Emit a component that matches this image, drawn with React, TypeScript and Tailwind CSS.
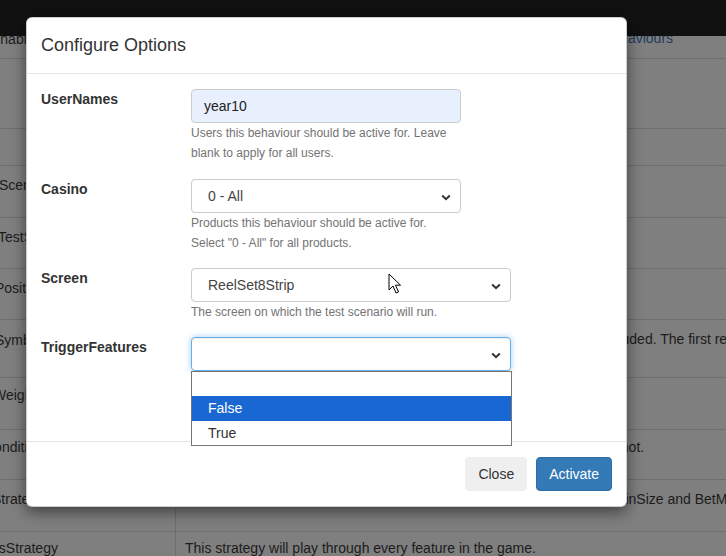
import React from "react";

const rows = [
  { h: "h-[23px]", left: "Enabled", lx: "ml-[-9px] mt-[-7px]", right: "", link: true },
  { h: "h-[70px]", left: "", lx: "", right: "" },
  { h: "h-[37px]", left: "", lx: "", right: "" },
  { h: "h-[52px]", left: "Scenario", lx: "ml-[-1px] mt-[9px]", right: "" },
  { h: "h-[51px]", left: "TestSpin", lx: "ml-[-2px] mt-[9px]", right: "" },
  { h: "h-[51px]", left: "Positions", lx: "ml-[-5px] mt-[9px]", right: "" },
  {
    h: "h-[58px]",
    left: "Symbols",
    lx: "ml-[-5px] mt-[10px]",
    right: "Comma separated list of symbols that will land, all others are then excluded. The first reel is reel 0.",
  },
  { h: "h-[52px]", left: "Weights", lx: "ml-[-7px] mt-[7px]", right: "" },
  {
    h: "h-[50px]",
    left: "Condition",
    lx: "ml-[-16px] mt-[7px]",
    right: "Conditions which are met before this behaviour is applied on a spin or not.",
  },
  {
    h: "h-[52px]",
    left: "Strategy",
    lx: "ml-[-8px] mt-[9px]",
    right: "This strategy will randomly select a valid bet amount, by varying the CoinSize and BetMultiplier values.",
  },
  {
    h: "h-[40px]",
    left: "AllFeaturesStrategy",
    lx: "ml-[-65px] mt-[6px]",
    right: "This strategy will play through every feature in the game.",
  },
];

function Chevron() {
  return (
    <svg width="10" height="7" viewBox="0 0 10 7" className="absolute right-[9px] top-[14px]">
      <path d="M1.2 1.5 L5 5.2 L8.8 1.5" fill="none" stroke="#333" strokeWidth="2" />
    </svg>
  );
}

function Select({ value, wide, focus }: { value: string; wide?: boolean; focus?: boolean }) {
  return (
    <div
      className={
        "relative h-[34px] rounded-[4px] border bg-white flex items-center pl-[16px] text-[14px] text-[#444] " +
        (wide ? "w-[320px] " : "w-[270px] ") +
        (focus
          ? "border-[#66afe9] shadow-[inset_0_1px_1px_rgba(0,0,0,0.075),0_0_6px_rgba(102,175,233,0.6)]"
          : "border-[#ccc]")
      }
    >
      {value}
      <Chevron />
    </div>
  );
}

function Group({ label, children, last }: { label: string; children: React.ReactNode; last?: string }) {
  return (
    <div className={"flex " + (last || "mb-[15px]")}>
      <div className="w-[150px] text-[14px] leading-[20px] font-bold text-[#333]">{label}</div>
      <div>{children}</div>
    </div>
  );
}

function Help({ children }: { children: React.ReactNode }) {
  return <div className="text-[12px] leading-[20px] text-[#737373]">{children}</div>;
}

export default function App() {
  return (
    <div className="relative w-[726px] h-[556px] overflow-hidden bg-[#7f7f7f] font-['Liberation_Sans',Arial,sans-serif]">
      <div className="relative z-10 h-[36px] bg-[#111]" />
      {rows.map((r, i) => (
        <div key={i} className={"flex border-b border-[#6e6e6e] " + r.h}>
          <div className="w-[176px] shrink-0 border-r border-[#6e6e6e] overflow-hidden">
            <div className={"whitespace-nowrap text-[14px] leading-[20px] text-[#1c1c1c] " + r.lx}>{r.left}</div>
          </div>
          <div className="flex-1 pl-[9px] overflow-hidden">
            {r.link ? (
              <div className="mt-[-8px] ml-[418px] whitespace-nowrap text-[14px] leading-[20px] text-[#1d3c5a]">
                Behaviours
              </div>
            ) : (
              <div
                className={
                  "whitespace-nowrap text-[14px] leading-[20px] text-[#1c1c1c] " +
                  (i === 10 ? "mt-[6px]" : i === 8 ? "mt-[7px]" : "mt-[9px]")
                }
              >
                {r.right}
              </div>
            )}
          </div>
        </div>
      ))}

      <div className="absolute z-20 left-[26px] top-[17px] w-[601px] rounded-[6px] bg-white border border-black/20 shadow-[0_5px_15px_rgba(0,0,0,0.5)]">
        <div className="px-[14px] pt-[14px] pb-[15px] border-b border-[#e5e5e5]">
          <div className="text-[18px] leading-[26px] text-[#333]">Configure Options</div>
        </div>
        <div className="relative px-[14px] pt-[15px] pb-[15px]">
          <Group label="UserNames" last="mb-[16px]">
            <div className="w-[270px] h-[34px] rounded-[4px] border border-[#ccc] bg-[#e8f0fe] flex items-center pl-[12px] text-[14px] text-[#222]">
              year10
            </div>
            <Help>
              Users this behaviour should be active for. Leave
              <br />
              blank to apply for all users.
            </Help>
          </Group>
          <Group label="Casino">
            <Select value="0 - All" />
            <Help>
              Products this behaviour should be active for.
              <br />
              Select "0 - All" for all products.
            </Help>
          </Group>
          <Group label="Screen">
            <Select value="ReelSet8Strip" wide />
            <Help>The screen on which the test scenario will run.</Help>
          </Group>
          <Group label="TriggerFeatures">
            <Select value="" wide focus />
            <div className="h-[40px]" />
          </Group>
        </div>
        <div className="flex justify-end gap-[9px] px-[14px] pt-[15px] pb-[15px] border-t border-[#e5e5e5]">
          <button className="h-[34px] px-[13px] rounded-[4px] bg-[#efefef] text-[14px] text-[#333]">Close</button>
          <button className="h-[34px] px-[12px] rounded-[4px] bg-[#337ab7] border border-[#2e6da4] text-[14px] text-white">
            Activate
          </button>
        </div>

        <div className="absolute left-[164px] top-[353px] w-[321px] border border-[#767676] bg-white text-[14px] text-[#333]">
          <div className="h-[24px]" />
          <div className="h-[25px] flex items-center pl-[16px] bg-[#1967d2] text-white">False</div>
          <div className="h-[24px] flex items-center pl-[16px]">True</div>
        </div>
      </div>

      <svg width="14" height="22" viewBox="0 0 14 22" className="absolute z-30 left-[388px] top-[273px]">
        <path
          d="M1 1 L1 17 L5 13 L8 20 L10.5 19 L7.5 12.2 L12.5 12.2 Z"
          fill="#fff"
          stroke="#000"
          strokeWidth="1"
          strokeLinejoin="round"
        />
      </svg>
    </div>
  );
}
